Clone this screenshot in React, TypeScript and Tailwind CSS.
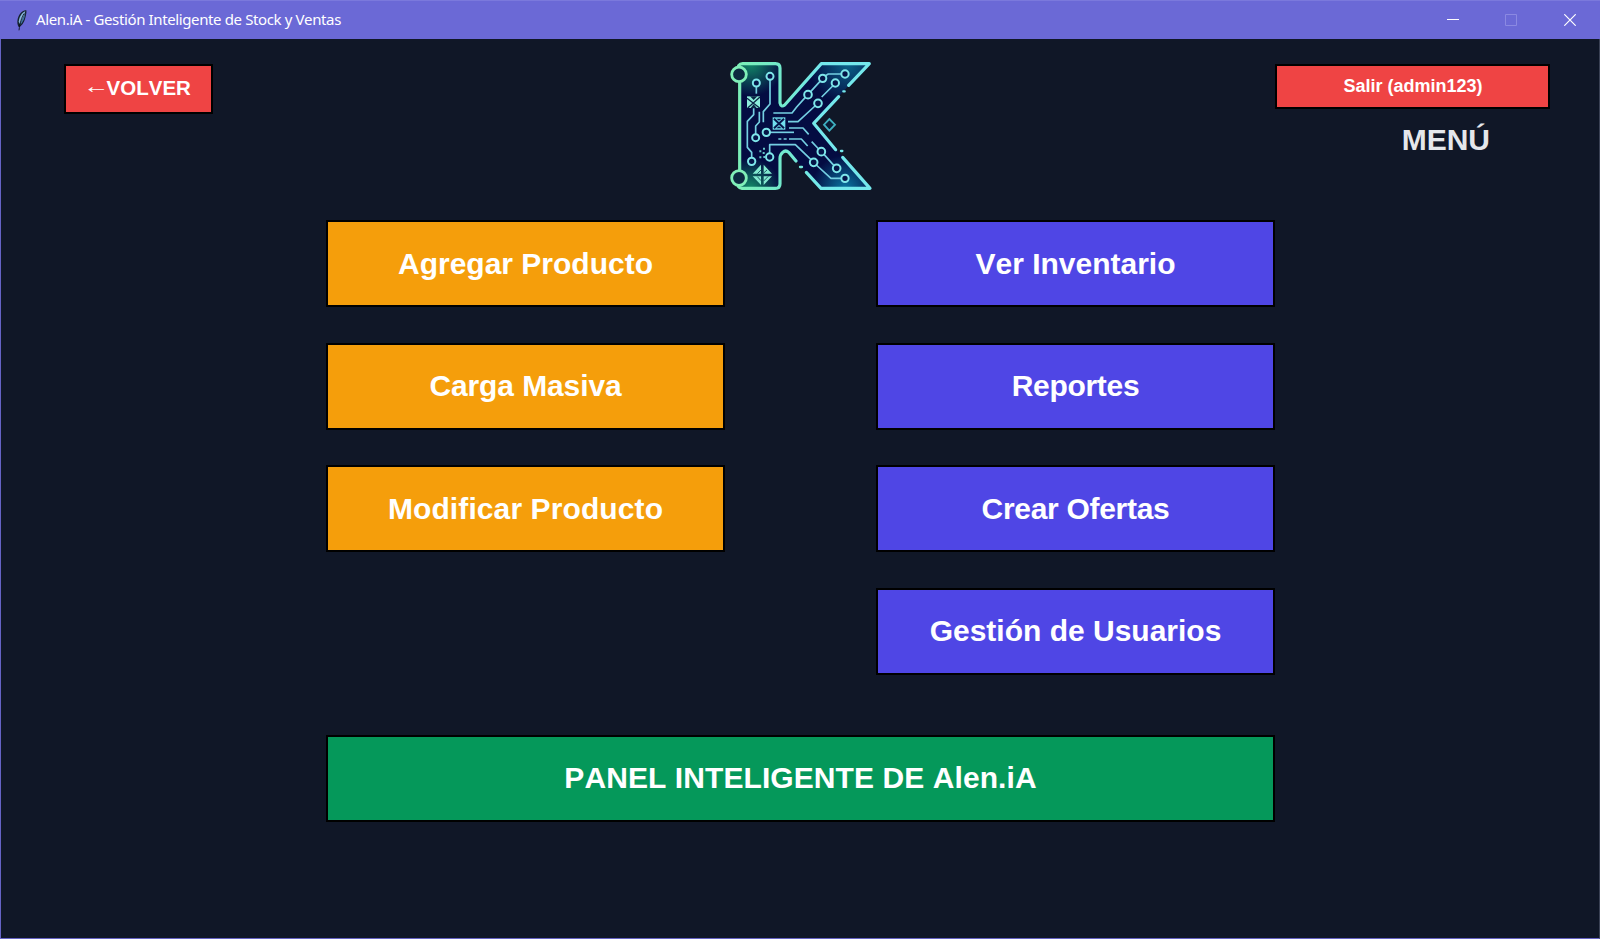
import type { ReactNode } from "react";

function Feather() {
  return (
    <svg viewBox="0 0 36 66" className="h-[22px] w-3" fill="none">
      <path d="M34 4C24 2 12 14 8 30C6 40 7 48 11 54C18 54 28 40 31 26C34 16 35 9 34 4Z" fill="#14212f" />
      <path d="M31 7C22 9 13 22 11 38L14 45C21 35 27 21 31 7Z" fill="#86b6dc" />
      <path d="M31 12C30 26 25 38 16 48L16 40C21 32 27 22 31 12Z" fill="#3f74a4" />
      <path d="M27 14C20 26 15 40 12 64" stroke="#0a0d14" strokeWidth="2.5" />
    </svg>
  );
}

const nodes: [number, number, number][] = [
  [109, 96, 10.5],
  [150, 76, 10.5],
  [107, 260, 10.5],
  [139, 244, 11],
  [95, 331, 11],
  [149, 318, 11],
  [375, 69, 11],
  [308, 82, 11],
  [346, 96, 11],
  [264, 131, 11.5],
  [294, 157, 11.5],
  [304, 302, 11.5],
  [281, 334, 11.5],
  [350, 352, 11.5],
  [375, 382, 11],
];

function Logo() {
  return (
    <svg viewBox="0 0 480 450" className="h-[150px] w-[160px]" fill="none">
      <defs>
        <radialGradient id="green" gradientUnits="userSpaceOnUse" cx="92" cy="36" r="100">
          <stop offset="0" stopColor="#128a68" />
          <stop offset="1" stopColor="#128a68" stopOpacity="0" />
        </radialGradient>
        <radialGradient id="green2" gradientUnits="userSpaceOnUse" cx="92" cy="412" r="90">
          <stop offset="0" stopColor="#128a68" />
          <stop offset="1" stopColor="#128a68" stopOpacity="0" />
        </radialGradient>
        <radialGradient id="blue" gradientUnits="userSpaceOnUse" cx="385" cy="40" r="120">
          <stop offset="0" stopColor="#0a6288" />
          <stop offset="1" stopColor="#0a6288" stopOpacity="0" />
        </radialGradient>
        <radialGradient id="blue2" gradientUnits="userSpaceOnUse" cx="375" cy="412" r="100">
          <stop offset="0" stopColor="#0a74a0" />
          <stop offset="1" stopColor="#0a74a0" stopOpacity="0" />
        </radialGradient>
        <linearGradient id="edge" gradientUnits="userSpaceOnUse" x1="35" y1="0" x2="300" y2="0">
          <stop offset="0" stopColor="#7df0b4" />
          <stop offset="0.5" stopColor="#72eac8" />
          <stop offset="1" stopColor="#74e8ec" />
        </linearGradient>
        <path
          id="body"
          d="M58 38H168Q180 38 180 50V158Q183 170 193 162L304 38H448L280 217L450 412H303L206 304Q197 296 188 304L180 314V400Q180 412 168 412H58Z"
        />
      </defs>
      <use href="#body" fill="#040c42" />
      <use href="#body" fill="url(#green)" />
      <use href="#body" fill="url(#green2)" />
      <use href="#body" fill="url(#blue)" />
      <use href="#body" fill="url(#blue2)" />

      <g stroke="url(#edge)" strokeWidth="9.5" strokeLinecap="round" strokeLinejoin="round">
        <path d="M59 95V355" />
        <path d="M56 44Q60 38 68 38H166Q180 38 180 52V156Q183 170 194 162L304 38H448L386 103" />
        <path d="M356 137L281 217L347 296" />
        <path d="M368 319L450 412H303L259 364" />
        <path d="M228 330L206 304Q197 296 188 304Q180 311 180 322V398Q180 412 166 412H66Q58 411 55 406" />
        <path d="M370 121H374M363 300H367M240 348H246" strokeWidth="7" />
      </g>
      <g stroke="#80efb8" strokeWidth="8.5" fill="#0c2940">
        <circle cx="57" cy="70" r="22" />
        <circle cx="57" cy="381" r="22" />
      </g>

      <g stroke="#74cfe2" strokeWidth="5" strokeLinejoin="round">
        <path d="M109 107V128" />
        <path d="M150 87V159L130 182V214" />
        <path d="M101 172V191L82 211V289L95 304V320" />
        <path d="M118 182V213L107 225V249" />
        <path d="M160 186H216L230 168L256 139M272 122L300 91M316 74L325 69H364" />
        <path d="M204 212H234L285 165M305 138L338 105" />
        <path d="M150 244H222" />
        <path d="M207 231H249L266 250" />
        <path d="M175 264H184M191 264H200" />
        <path d="M207 264H244L263 285" />
        <path d="M149 307V281H226L273 326M289 342L333 382H364" />
        <path d="M275 272L296 294M312 310L342 344" />
      </g>
      <g stroke="#7ee6ea" strokeWidth="6" fill="#061548">
        {nodes.map(([cx, cy, r]) => (
          <circle key={`${cx}-${cy}`} cx={cx} cy={cy} r={r} />
        ))}
      </g>

      <path d="M81 136H120V171H81Z" fill="#8deedb" />
      <path d="M90 136L101 147L112 136Z" fill="#0a2444" />
      <path d="M81 142L119 171M120 138L83 171" stroke="#0a2444" strokeWidth="4" />
      <path d="M92 171L101 160L110 171Z" fill="#0a2444" />
      <path d="M158 199H196V236H158Z" fill="#72dfee" />
      <path d="M162 203L192 232M192 203L162 232" stroke="#08164a" strokeWidth="6" />
      <path d="M169 203L177 209L185 203ZM169 232L177 226L185 232Z" fill="#08164a" />

      <path
        d="M123 341V368H98ZM131 341L156 368H131ZM98 376H123V402ZM131 376H156L131 402Z"
        fill="#82ead0"
      />
      <path d="M112 368L123 357M131 366L141 357M112 377L123 389M131 390L145 376" stroke="#0c3c50" strokeWidth="2.5" />
      <path
        d="M129 290h6v6h-6zM118 298h6v6h-6zM128 303h6v6h-6zM118 316h6v6h-6zM130 315h6v6h-6z"
        fill="#65c6c8"
      />
      <path d="M328 204L345 221L328 239L312 221Z" fill="#0a1c33" stroke="#3fb0c0" strokeWidth="5.5" />
    </svg>
  );
}

function TitleBar() {
  return (
    <header className="flex h-[39px] items-center border-t border-[#7b79dc] bg-[#6b69d6] pl-[15px] text-white">
      <Feather />
      <h1 className="mb-[2px] ml-[9px] font-['Noto_Sans',sans-serif] text-[15px] leading-5 tracking-[-0.38px] whitespace-nowrap">
        Alen.iA - Gestión Inteligente de Stock y Ventas
      </h1>
      <div className="ml-auto flex items-center">
        <button className="flex w-[58px] justify-center" aria-label="Minimizar">
          <svg viewBox="0 0 12 12" className="size-3" shapeRendering="crispEdges">
            <path d="M0 5h12v1H0z" fill="#fff" />
          </svg>
        </button>
        <button className="flex w-[58px] justify-center" aria-label="Maximizar">
          <svg viewBox="0 0 12 12" className="size-3" fill="none">
            <path d="M.5.5h11v11H.5z" stroke="#8b89e2" />
          </svg>
        </button>
        <button className="flex w-[60px] justify-center" aria-label="Cerrar">
          <svg viewBox="0 0 12 12" className="size-3" fill="none">
            <path d="M.3.3l11.4 11.4M11.7.3L.3 11.7" stroke="#fff" strokeWidth="1.2" />
          </svg>
        </button>
      </div>
    </header>
  );
}

function MenuButton({ className, children }: { className: string; children: ReactNode }) {
  return (
    <button
      className={`flex h-[87px] w-full items-center justify-center border-2 border-black text-[30px] leading-none font-bold text-white ${className}`}
    >
      {children}
    </button>
  );
}

export default function App() {
  return (
    <div className="flex h-[939px] w-[1600px] flex-col overflow-hidden bg-[#101727] font-['Liberation_Sans',Arial,sans-serif] [font-kerning:none]">
      <TitleBar />
      <main className="flex-1 border-r border-b border-l border-r-[#3a4154] border-b-[#6563c4] border-l-[#6563c4]">
        <div className="flex h-[181px] items-start justify-between pt-[25px] pr-[49px] pl-[63px]">
          <div className="w-[275px]">
            <button className="flex h-[50px] w-[149px] items-center justify-center border-2 border-black bg-[#ef4444] pb-0.5 text-[20.5px] leading-none font-bold text-white">
              <span className="mb-[3px] inline-block scale-x-[1.28] font-['Liberation_Serif',serif] font-normal">←</span>
              VOLVER
            </button>
          </div>
          <div className="-mt-[13.5px] mr-[14px]">
            <Logo />
          </div>
          <div className="flex w-[275px] flex-col items-end">
            <button className="flex h-[45px] w-full items-center justify-center border-2 border-black bg-[#ef4444] pb-0.5 pl-px text-lg leading-none font-bold text-white">
              Salir (admin123)
            </button>
            <h2 className="mt-4 mr-[60px] text-[30px] leading-none font-bold text-gray-200">MENÚ</h2>
          </div>
        </div>

        <div className="ml-[325px] w-[949px]">
          <div className="flex justify-between">
            <div className="flex w-[399px] flex-col gap-[35.5px]">
              <MenuButton className="bg-[#f59e0b]">Agregar Producto</MenuButton>
              <MenuButton className="bg-[#f59e0b] tracking-[-0.1px]">Carga Masiva</MenuButton>
              <MenuButton className="bg-[#f59e0b] tracking-[0.1px]">Modificar Producto</MenuButton>
            </div>
            <div className="flex w-[399px] flex-col gap-[35.5px]">
              <MenuButton className="bg-[#4f46e5]">Ver Inventario</MenuButton>
              <MenuButton className="bg-[#4f46e5] tracking-[-0.3px]">Reportes</MenuButton>
              <MenuButton className="bg-[#4f46e5] tracking-[-0.3px]">Crear Ofertas</MenuButton>
              <MenuButton className="bg-[#4f46e5]">Gestión de Usuarios</MenuButton>
            </div>
          </div>
          <div className="mt-[60.4px]">
            <MenuButton className="bg-[#05985a] tracking-[0.08px]">PANEL INTELIGENTE DE Alen.iA</MenuButton>
          </div>
        </div>
      </main>
    </div>
  );
}
